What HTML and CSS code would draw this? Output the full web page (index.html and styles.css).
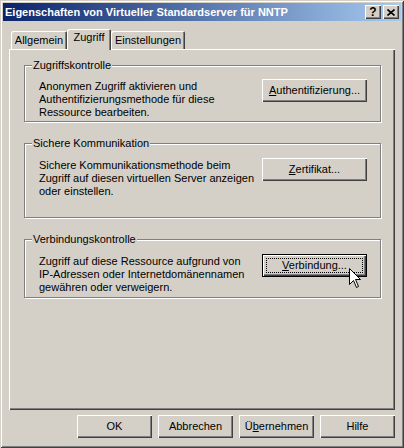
FILE: index.html
```html
<!DOCTYPE html>
<html lang="de">
<head>
    <meta charset="UTF-8">
    <title>Eigenschaften von Virtueller Standardserver für NNTP</title>
    <link rel="stylesheet" href="styles.css">
</head>
<body>
    <div class="window">
        <div class="titlebar">
            <span class="title">Eigenschaften von Virtueller Standardserver für NNTP</span>
            <div class="caption-buttons">
                <span class="cap-btn">?</span>
                <span class="cap-btn">
                    <svg width="8" height="7" viewBox="0 0 8 7">
                        <path d="M0.5 0.5 L7.5 6.5 M7.5 0.5 L0.5 6.5" stroke="#000" stroke-width="1.6" fill="none"/>
                    </svg>
                </span>
            </div>
        </div>

        <div class="client">
            <div class="tabs">
                <div class="tab tab-general">Allgemein</div>
                <div class="tab tab-access active">Zugriff</div>
                <div class="tab tab-settings">Einstellungen</div>
            </div>

            <div class="panel">
                <fieldset class="group group-access">
                    <legend>Zugriffskontrolle</legend>
                    <p>Anonymen Zugriff aktivieren und<br>Authentifizierungsmethode für diese<br>Ressource bearbeiten.</p>
                    <button class="btn"><u>A</u>uthentifizierung...</button>
                </fieldset>

                <fieldset class="group group-secure">
                    <legend>Sichere Kommunikation</legend>
                    <p>Sichere Kommunikationsmethode beim<br>Zugriff auf diesen virtuellen Server anzeigen<br>oder einstellen.</p>
                    <button class="btn"><u>Z</u>ertifikat...</button>
                </fieldset>

                <fieldset class="group group-conn">
                    <legend>Verbindungskontrolle</legend>
                    <p>Zugriff auf diese Ressource aufgrund von<br>IP-Adressen oder Internetdomänennamen<br>gewähren oder verweigern.</p>
                    <button class="btn focused"><u>V</u>erbindung...</button>
                </fieldset>
            </div>

            <div class="actions">
                <button class="btn">OK</button>
                <button class="btn">Abbrechen</button>
                <button class="btn">Ü<u>b</u>ernehmen</button>
                <button class="btn">Hilfe</button>
            </div>
        </div>

        <svg class="cursor" width="13" height="21" viewBox="0 0 13 21">
            <path d="M0.5 0.5 L0.5 16.5 L4.5 12.5 L7.5 19.5 L9.5 18.5 L6.5 11.5 L11.5 11.5 Z" fill="#fff" stroke="#000" stroke-width="1"/>
        </svg>
    </div>
</body>
</html>
```

FILE: styles.css
```css
body {
    margin: 0;
    padding: 0;
    background-color: #d4d0c8;
    font-family: "Liberation Sans", Arial, sans-serif;
    font-size: 11px;
    line-height: 13px;
    color: #000;
}

.window {
    position: relative;
    width: 404px;
    height: 448px;
    box-sizing: border-box;
    padding: 3px;
    background-color: #d4d0c8;
    box-shadow: inset 1px 1px #d4d0c8, inset -1px -1px #404040,
                inset 2px 2px #fff, inset -2px -2px #808080;
}

.titlebar {
    height: 18px;
    display: flex;
    align-items: center;
    justify-content: space-between;
    padding: 0 2px 0 2px;
    background: linear-gradient(to right, #0a246a, #a6caf0);
}

.title {
    color: #fff;
    font-weight: bold;
    font-size: 11px;
    white-space: nowrap;
}

.caption-buttons {
    display: flex;
    gap: 2px;
}

.cap-btn {
    width: 16px;
    height: 14px;
    display: flex;
    align-items: center;
    justify-content: center;
    background-color: #d4d0c8;
    font-weight: bold;
    font-size: 12px;
    box-shadow: inset 1px 1px #fff, inset -1px -1px #404040, inset -2px -2px #808080;
}

.client {
    padding: 8px 6px 0 6px;
}

.tabs {
    display: flex;
    align-items: flex-end;
    height: 20px;
    padding-left: 2px;
}

.tab {
    height: 18px;
    box-sizing: border-box;
    padding-top: 3px;
    text-align: center;
    background-color: #d4d0c8;
    box-shadow: inset 1px 1px #fff, inset -1px 0 #404040, inset -2px 0 #808080;
    border-radius: 2px 2px 0 0;
    white-space: nowrap;
}

.tab-general {
    width: 56px;
}

.tab-access {
    width: 44px;
}

.tab-settings {
    width: 74px;
}

.tab.active {
    position: relative;
    z-index: 1;
    height: 21px;
    margin-bottom: -1px;
    padding-top: 2px;
}

.panel {
    height: 361px;
    box-sizing: border-box;
    padding: 10px 14px 0 15px;
    display: flex;
    flex-direction: column;
    gap: 15px;
    box-shadow: inset 1px 1px #fff, inset -1px -1px #404040, inset -2px -2px #808080;
}

.group {
    margin: 0;
    padding: 8px 13px 0 14px;
    border: 1px solid #808080;
    box-shadow: inset 1px 1px #fff, 1px 1px #fff;
    display: flex;
    justify-content: space-between;
    align-items: flex-start;
    box-sizing: border-box;
}

.group legend {
    padding: 0 1px;
    margin-left: -7px;
    background-color: #d4d0c8;
    line-height: 13px;
}

.group p {
    margin: 0;
    white-space: nowrap;
}

.group-access {
    height: 63px;
}

.group-secure {
    height: 81px;
    padding-top: 9px;
}

.group-conn {
    height: 65px;
    padding-top: 9px;
}

.btn {
    font-family: inherit;
    font-size: 11px;
    line-height: 13px;
    color: #000;
    background-color: #d4d0c8;
    border: none;
    padding: 0;
    width: 105px;
    height: 23px;
    flex-shrink: 0;
    box-shadow: inset 1px 1px #fff, inset -1px -1px #404040, inset -2px -2px #808080;
}

.group .btn {
    margin-top: -1px;
}

.btn.focused {
    border: 1px solid #000;
    outline: 1px dotted #000;
    outline-offset: -5px;
}

.actions {
    display: flex;
    justify-content: flex-end;
    gap: 6px;
    margin-top: 5px;
}

.actions .btn {
    width: 75px;
}

.cursor {
    position: absolute;
    left: 349px;
    top: 268px;
}
```
